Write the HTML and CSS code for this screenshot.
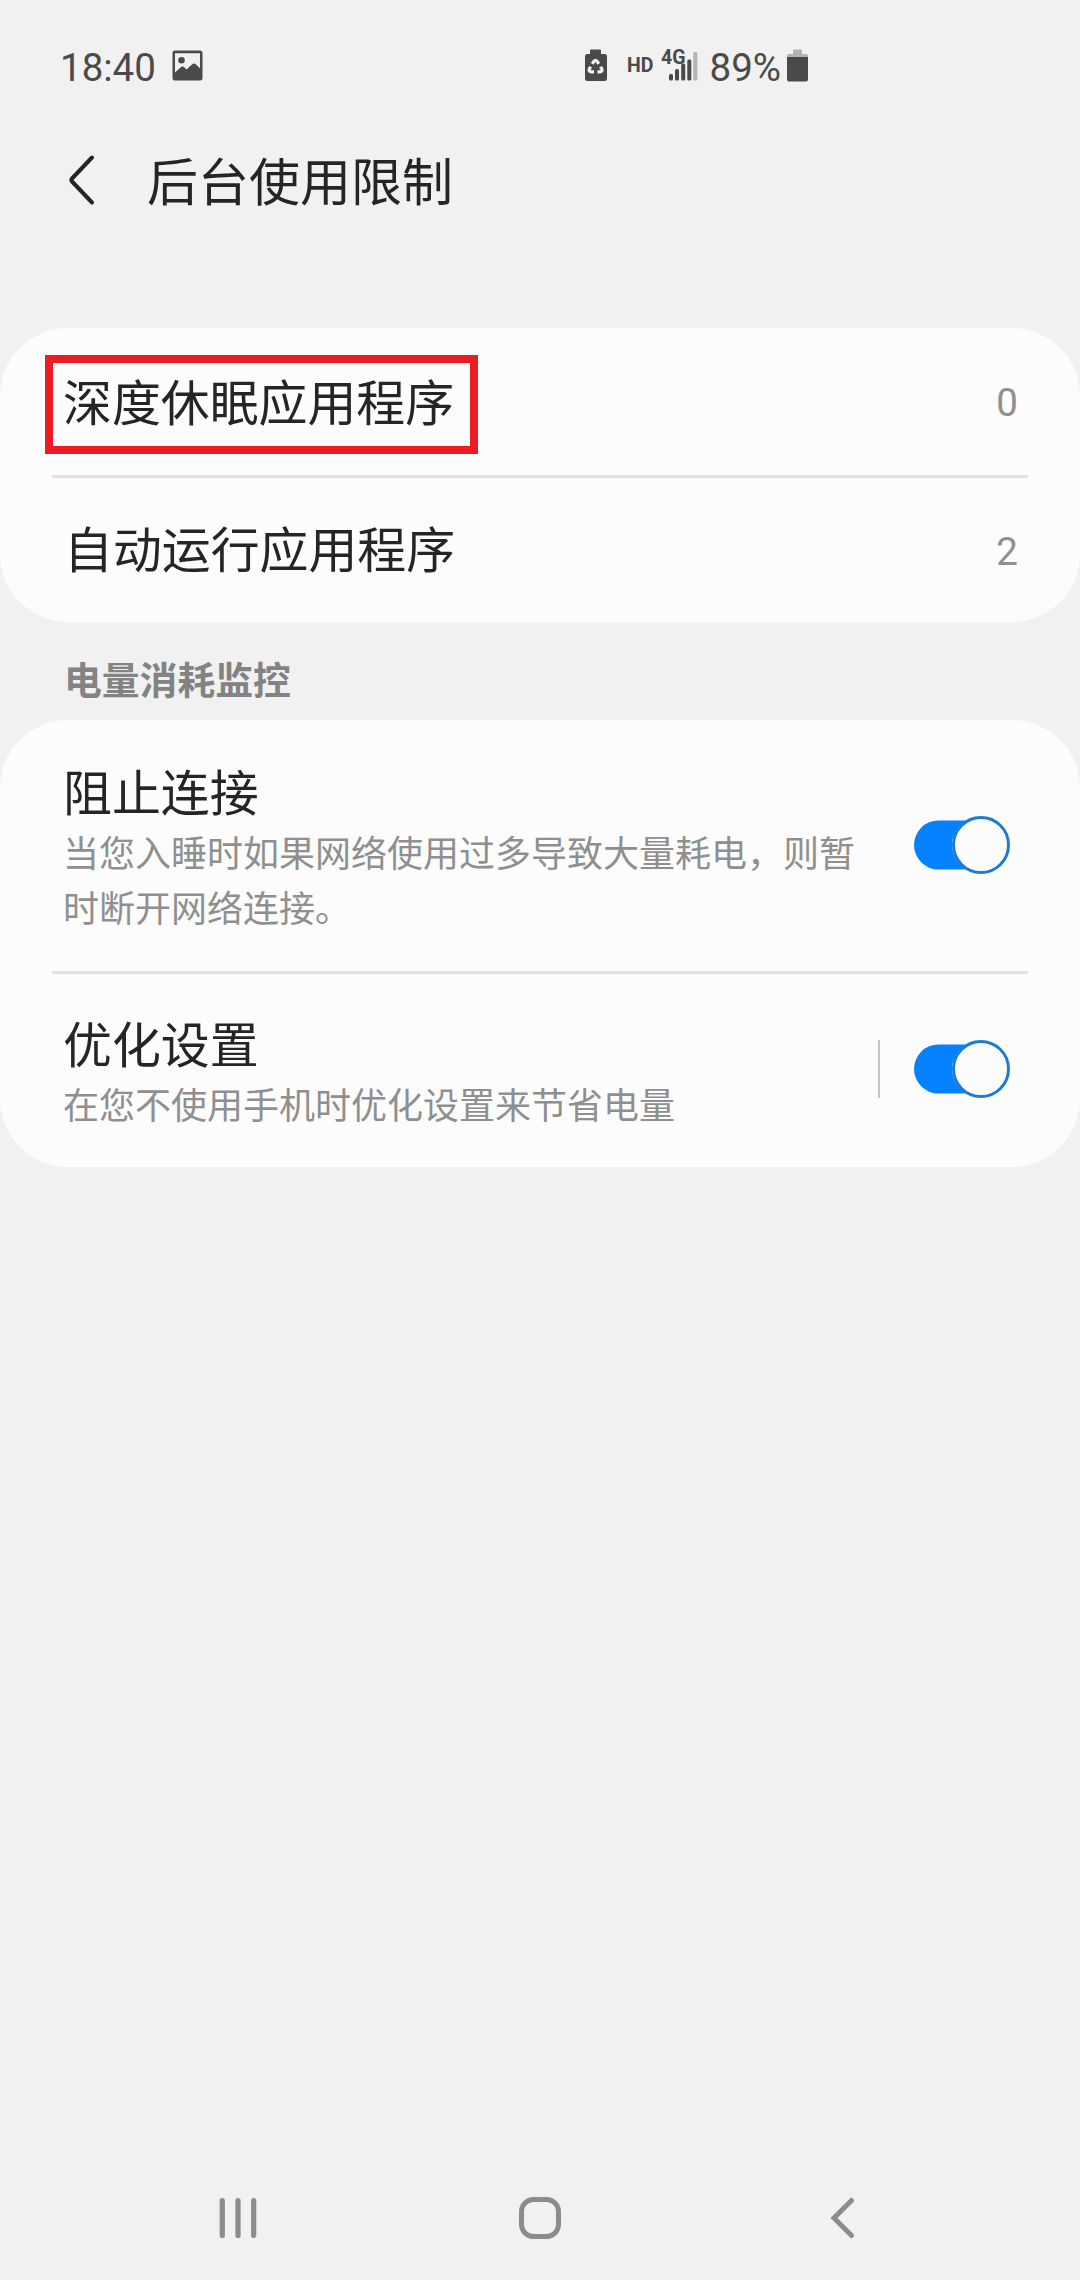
FILE: index.html
```html
<!DOCTYPE html>
<html lang="zh-CN">
<head>
    <meta charset="UTF-8">
    <meta name="viewport" content="width=device-width, initial-scale=1.0">
    <title>后台使用限制</title>
    <link rel="stylesheet" href="styles.css">
</head>
<body>
    <!-- Status bar -->
    <div class="status-bar">
        <span class="status-text">18:40</span>
        <svg class="icon-picture" width="32" height="32" viewBox="0 0 32 32">
            <path fill="#4a4a4a" fill-rule="evenodd" d="M3 .5h25a2.500 2.500 0 0 1 2.500 2.500v25a2.500 2.500 0 0 1-2.500 2.500h-25a2.500 2.500 0 0 1-2.500-2.500v-25a2.500 2.500 0 0 1 2.500-2.500zM3 3.200V22.500L8.500 17.500Q10.500 15.700 12.500 17.500L14.500 19.500L20 14.500Q22 12.500 24 14.500L28 18.200V3.200z"/>
            <circle cx="9.500" cy="10.300" r="3.300" fill="#4a4a4a"/>
        </svg>
        <div class="status-right">
            <svg class="icon-saver" width="24" height="33" viewBox="0 0 24 33">
                <path fill="#4a4a4a" d="M7 .5h9a1 1 0 0 1 1 1v3.500h3.500a2.500 2.500 0 0 1 2.500 2.500v22a2.500 2.500 0 0 1-2.500 2.500h-17a2.500 2.500 0 0 1-2.500-2.500v-22a2.500 2.500 0 0 1 2.500-2.500h2.500v-3.500a1 1 0 0 1 1-1z"/>
                <g fill="none" stroke="#f1f1f1" stroke-width="3.200">
                    <path d="M8.300 14.800L9.700 12.500Q11.500 10.300 13.300 12.500L14.700 14.800"/>
                    <path d="M16.600 17.700L18 20.200Q18.500 22.700 16 22.800H13.500"/>
                    <path d="M10 22.800H7.200Q4.500 22.700 5.200 20.200L6.700 17.700"/>
                </g>
            </svg>
            <span class="hd">HD</span>
            <svg class="icon-signal" width="38" height="33" viewBox="0 0 38 33">
                <text class="network" x="0" y="15">4G</text>
                <g fill="#4a4a4a">
                    <rect x="8" y="25" width="4" height="6.500" rx="1.500"/>
                    <rect x="14" y="20" width="4" height="11.500" rx="1.500"/>
                    <rect x="20.200" y="14.500" width="4" height="17" rx="1.500"/>
                    <rect x="26.300" y="10.500" width="4" height="21" rx="1.500"/>
                </g>
                <rect x="32.300" y="3" width="4" height="28.500" rx="1.500" fill="#b3b3b3"/>
            </svg>
            <span class="status-text">89%</span>
            <svg class="icon-battery" width="22" height="33" viewBox="0 0 22 33">
                <path fill="#b3b3b3" d="M7 .5h7a1 1 0 0 1 1 1v3.500h4a2 2 0 0 1 2 2v2H0v-2a2 2 0 0 1 2-2h4v-3.500a1 1 0 0 1 1-1z"/>
                <path fill="#4a4a4a" d="M0 8h21v22.500a2 2 0 0 1-2 2h-17a2 2 0 0 1-2-2z"/>
            </svg>
        </div>
    </div>

    <!-- Header -->
    <div class="header">
        <svg width="28" height="52" viewBox="0 0 28 52">
            <path d="M24 3.500L4 24.500Q2.500 26 4 27.500L24 48.500" fill="none" stroke="#252525" stroke-width="4" stroke-linecap="round"/>
        </svg>
        <h1 class="title">后台使用限制</h1>
    </div>

    <!-- App lists -->
    <div class="card">
        <div class="row row-first">
            <span class="label highlight">深度休眠应用程序</span>
            <span class="count">0</span>
        </div>
        <div class="divider"></div>
        <div class="row row-second">
            <span class="label">自动运行应用程序</span>
            <span class="count">2</span>
        </div>
    </div>

    <h2 class="section">电量消耗监控</h2>

    <!-- Power monitoring -->
    <div class="card">
        <div class="row row-block">
            <div class="info">
                <div class="label">阻止连接</div>
                <div class="desc">当您入睡时如果网络使用过多导致大量耗电，则暂时断开网络连接。</div>
            </div>
            <svg class="switch" width="96" height="58" viewBox="0 0 96 58">
                <circle cx="67" cy="29" r="27.500" fill="#fcfcfc" stroke="#1f7ad4" stroke-width="3"/>
                <path d="M24.500 4.500H53A27.500 27.500 0 0 0 53 53.500H24.500A24.500 24.500 0 0 1 24.500 4.500z" fill="#0381fe"/>
            </svg>
        </div>
        <div class="divider"></div>
        <div class="row row-optimize">
            <div class="info">
                <div class="label">优化设置</div>
                <div class="desc">在您不使用手机时优化设置来节省电量</div>
            </div>
            <div class="separator"></div>
            <svg class="switch" width="96" height="58" viewBox="0 0 96 58">
                <circle cx="67" cy="29" r="27.500" fill="#fcfcfc" stroke="#1f7ad4" stroke-width="3"/>
                <path d="M24.500 4.500H53A27.500 27.500 0 0 0 53 53.500H24.500A24.500 24.500 0 0 1 24.500 4.500z" fill="#0381fe"/>
            </svg>
        </div>
    </div>

    <!-- Navigation bar -->
    <div class="nav-bar">
        <svg width="42" height="42" viewBox="0 0 42 42">
            <path d="M5.300 3.500V38.500M21 3.500V38.500M36.700 3.500V38.500" stroke="#8c8c8c" stroke-width="5.200" stroke-linecap="round"/>
        </svg>
        <svg width="42" height="42" viewBox="0 0 42 42">
            <rect x="2.500" y="2.500" width="37" height="37" rx="12" fill="none" stroke="#8c8c8c" stroke-width="5"/>
        </svg>
        <svg width="42" height="42" viewBox="0 0 42 42">
            <path d="M30.500 3.500L13 21L30.500 38.500" fill="none" stroke="#8c8c8c" stroke-width="5" stroke-linecap="round"/>
        </svg>
    </div>
</body>
</html>
```

FILE: styles.css
```css
* {
    box-sizing: border-box;
}

body {
    display: flex;
    flex-direction: column;
    height: 2280px;
    margin: 0;
    background-color: #f1f1f1;
    color: #252525;
    font-family: Roboto, "Noto Sans CJK SC", sans-serif;
}

svg {
    display: block;
    flex-shrink: 0;
    overflow: visible;
}

/* Status bar */
.status-bar {
    display: flex;
    align-items: center;
    height: 131px;
    padding: 0 271px 0 60px;
    color: #4a4a4a;
}

.status-text {
    font-size: 38.5px;
    line-height: 46px;
    margin-top: 4px;
}

.icon-picture {
    margin-left: 16px;
}

.status-right {
    display: flex;
    align-items: center;
    margin-left: auto;
}

.hd {
    margin-left: 19px;
    font-size: 19.5px;
    font-weight: 700;
}

.icon-signal {
    margin-left: 7px;
}

.network {
    font-size: 19.5px;
    font-weight: 700;
    fill: #4a4a4a;
}

.icon-signal + .status-text {
    margin-left: 11px;
}

.icon-battery {
    margin-left: 6px;
}

/* Header */
.header {
    display: flex;
    align-items: center;
    gap: 51px;
    height: 98px;
    margin-bottom: 99px;
    padding-left: 68px;
}

.title {
    margin: 0;
    padding-top: 7px;
    font-size: 51px;
    font-weight: 400;
    line-height: 60px;
}

/* Cards */
.card {
    background-color: #fcfcfc;
    border-radius: 68px;
}

.row {
    display: flex;
    align-items: center;
    justify-content: space-between;
    padding: 0 62px 0 64px;
}

.row-first {
    height: 147px;
    padding-left: 45px;
}

.row-second {
    height: 144px;
}

.row-second .label {
    padding-top: 4px;
}

.row-block {
    height: 251px;
    padding: 0 70px 2px 63px;
}

.row-optimize {
    height: 193px;
    padding: 0 70px 4px 63px;
}

.divider {
    height: 3px;
    margin: 0 52px;
    background-color: #e4e4e4;
}

.label {
    font-size: 48.9px;
    line-height: 60px;
}

.highlight {
    width: 433px;
    height: 99px;
    padding: 12px 0 0 10px;
    border: 8px solid #ed1c24;
    margin-top: 6px;
    white-space: nowrap;
}

.count {
    margin-top: 2px;
    color: #8f8f8f;
    font-size: 38.5px;
}

.section {
    height: 98px;
    margin: 0;
    padding-left: 64px;
    color: #838383;
    font-size: 37.8px;
    font-weight: 700;
    line-height: 119px;
}

.info {
    width: 800px;
    padding-top: 14px;
}

.desc {
    padding-top: 3px;
    color: #8f8f8f;
    font-size: 36px;
    line-height: 55px;
}

.separator {
    width: 2px;
    height: 58px;
    margin: 0 34px 0 auto;
    background-color: #c4c4c4;
}

/* Navigation bar */
.nav-bar {
    display: flex;
    align-items: center;
    justify-content: space-between;
    height: 124px;
    margin-top: auto;
    padding: 0 217px;
}
```
